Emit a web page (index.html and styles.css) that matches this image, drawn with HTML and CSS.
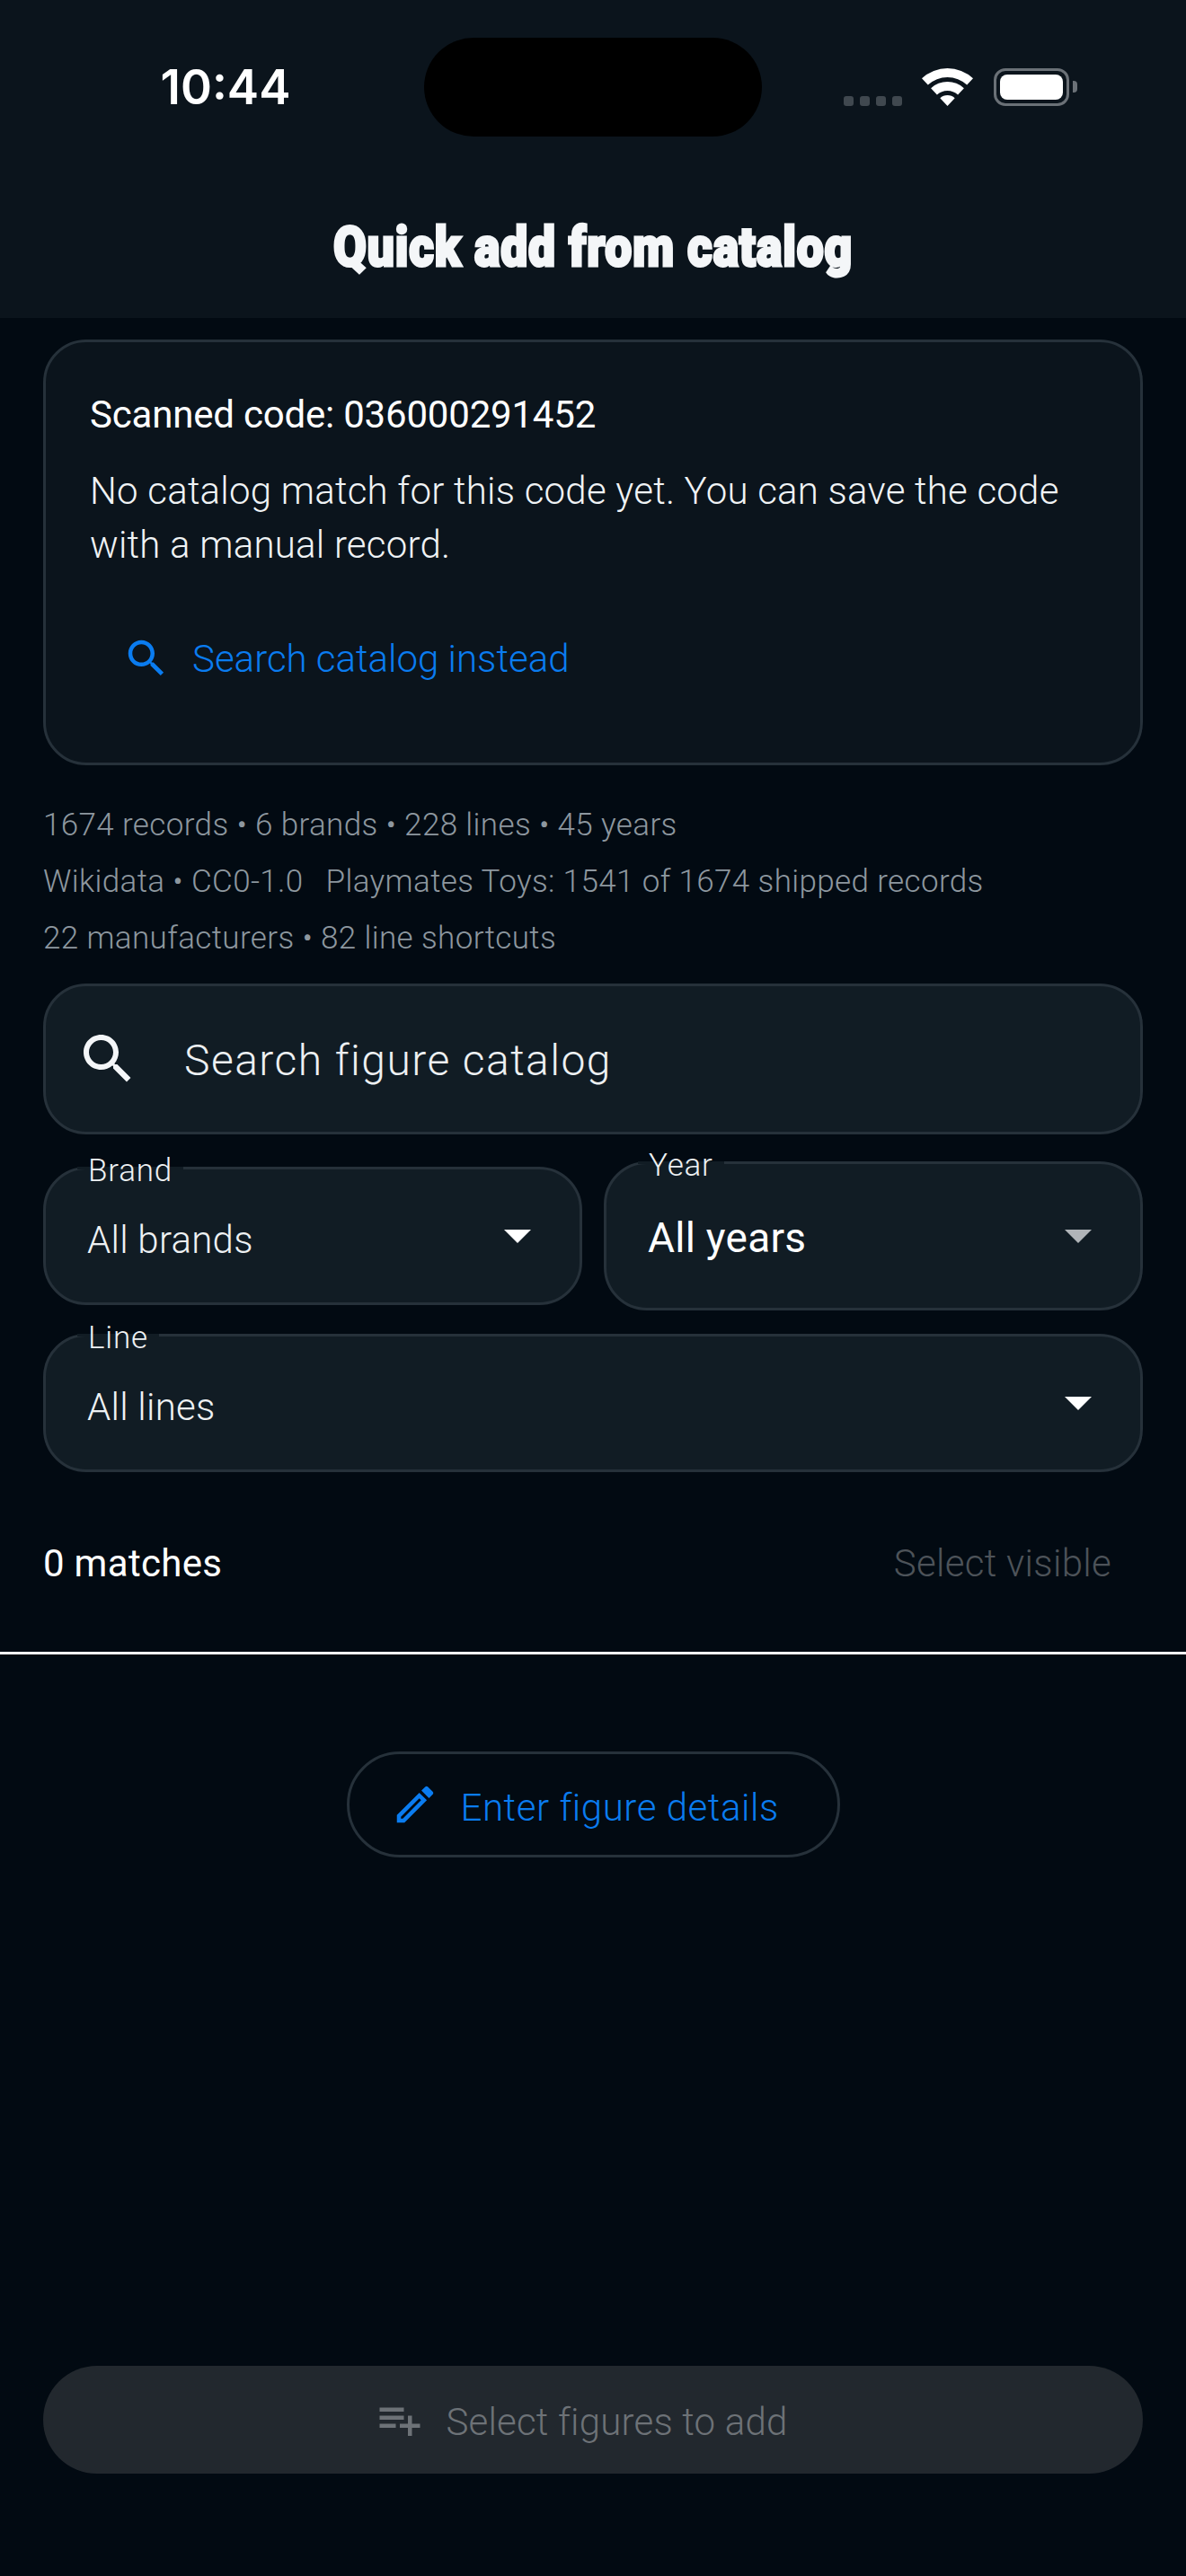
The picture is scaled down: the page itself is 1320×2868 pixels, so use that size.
FILE: index.html
```html
<!DOCTYPE html>
<html lang="en">
<head>
<meta charset="utf-8">
<title>Quick add from catalog</title>
<link rel="stylesheet" href="styles.css">
</head>
<body>
<header class="appbar">
  <div class="status">
    <div class="status-left"><span class="time">10:44</span></div>
    <div class="island"></div>
    <div class="status-right">
      <div class="dots"><i></i><i></i><i></i><i></i></div>
      <svg class="wifi" viewBox="0 0 57 42"><path d="M0 11.2A42 42 0 0 1 57 11.2L50.2 18.5A32 32 0 0 0 6.8 18.5Z"/><path d="M10.1 22.2A27 27 0 0 1 46.9 22.2L40.1 29.5A17 17 0 0 0 16.9 29.5Z"/><path d="M20.3 33.2A12 12 0 0 1 36.7 33.2L28.5 42Z"/></svg>
      <div class="battery"><div class="battery-fill"></div></div>
      <div class="battery-nub"></div>
    </div>
  </div>
  <h1 class="title"><span>Quick add from catalog</span></h1>
</header>
<main class="main">
  <section class="card">
    <p class="code">Scanned code: 036000291452</p>
    <p class="body-text">No catalog match for this code yet. You can save the code with a manual record.</p>
    <div class="link">
      <svg class="icon-54 blue" viewBox="0 0 24 24"><path d="M15.5 14h-.79l-.28-.27C15.41 12.59 16 11.11 16 9.5 16 5.91 13.09 3 9.5 3S3 5.91 3 9.5 5.91 16 9.5 16c1.61 0 3.09-.59 4.23-1.57l.27.28v.79l5 4.99L20.49 19l-4.99-5zm-6 0C7.01 14 5 11.99 5 9.5S7.01 5 9.5 5 14 7.01 14 9.5 11.99 14 9.5 14z"/></svg>
      <span>Search catalog instead</span>
    </div>
  </section>
  <div class="stats">
    <p>1674 records • 6 brands • 228 lines • 45 years</p>
    <p>Wikidata • CC0-1.0 <span class="stat-gap">Playmates Toys: 1541 of 1674 shipped records</span></p>
    <p>22 manufacturers • 82 line shortcuts</p>
  </div>
  <div class="search">
    <svg class="icon-72" viewBox="0 0 24 24"><path d="M15.5 14h-.79l-.28-.27C15.41 12.59 16 11.11 16 9.5 16 5.91 13.09 3 9.5 3S3 5.91 3 9.5 5.91 16 9.5 16c1.61 0 3.09-.59 4.23-1.57l.27.28v.79l5 4.99L20.49 19l-4.99-5zm-6 0C7.01 14 5 11.99 5 9.5S7.01 5 9.5 5 14 7.01 14 9.5 11.99 14 9.5 14z"/></svg>
    <span>Search figure catalog</span>
  </div>
  <div class="filters">
    <div class="select">
      <span class="select-label">Brand</span>
      <span class="select-value">All brands</span>
      <svg class="arrow" viewBox="0 0 30 15"><path d="M0 0H30L15 15Z"/></svg>
    </div>
    <div class="select select-active">
      <span class="select-label">Year</span>
      <span class="select-value">All years</span>
      <svg class="arrow arrow-dim" viewBox="0 0 30 15"><path d="M0 0H30L15 15Z"/></svg>
    </div>
  </div>
  <div class="select select-line">
    <span class="select-label">Line</span>
    <span class="select-value">All lines</span>
    <svg class="arrow" viewBox="0 0 30 15"><path d="M0 0H30L15 15Z"/></svg>
  </div>
  <div class="results">
    <span class="count">0 matches</span>
    <span class="select-visible">Select visible</span>
  </div>
</main>
<div class="divider"></div>
<div class="details-wrap">
  <div class="details">
    <svg class="icon-54 blue" viewBox="0 0 24 24"><path d="M14.06 9.02l.92.92L5.92 19H5v-.92l9.06-9.06M17.66 3c-.25 0-.51.1-.7.29l-1.83 1.83 3.75 3.75 1.83-1.83c.39-.39.39-1.02 0-1.41l-2.34-2.34c-.2-.2-.45-.29-.71-.29zm-3.6 3.19L3 17.25V21h3.75L17.81 9.94l-3.75-3.75z"/></svg>
    <span>Enter figure details</span>
  </div>
</div>
<footer class="footer">
  <div class="add">
    <svg class="icon-54 grey" viewBox="0 0 24 24"><path d="M14 10H2v2h12v-2zm0-4H2v2h12V6zm4 8v-4h-2v4h-4v2h4v4h2v-4h4v-2h-4zM2 16h8v-2H2v2z"/></svg>
    <span>Select figures to add</span>
  </div>
</footer>
</body>
</html>
```
FILE: styles.css
```css
* { box-sizing: border-box; }
html, body { margin: 0; padding: 0; }
body {
  width: 1320px;
  height: 2868px;
  background: #020a12;
  color: #f4f6f8;
  font-family: Roboto, "Liberation Sans", sans-serif;
  font-size: 42px;
  font-weight: 300;
  display: flex;
  flex-direction: column;
  overflow: hidden;
}
p { margin: 0; }
.appbar { height: 354px; background: #0b141c; flex: none; }
.status { height: 196px; padding-top: 42px; display: flex; align-items: flex-start; }
.status-left { width: 472px; height: 110px; padding-left: 30px; display: flex; align-items: center; justify-content: center; }
.time { font-family: Inter, sans-serif; font-weight: 600; font-size: 53px; color: #fff; }
.island { width: 376px; height: 110px; border-radius: 55px; background: #000; }
.status-right { margin-left: 91px; height: 110px; display: flex; align-items: center; padding-bottom: 1px; }
.dots { display: flex; gap: 7px; align-self: center; margin-top: 31px; }
.dots i { display: block; width: 11px; height: 11px; border-radius: 3px; background: #40484f; }
.wifi { width: 57px; height: 42px; fill: #fff; margin-left: 22px; }
.battery { width: 84px; height: 42px; margin-left: 23px; padding: 4px; border: 3px solid #6b7177; border-radius: 13px; }
.battery-fill { width: 100%; height: 100%; background: #fff; border-radius: 8px; }
.battery-nub { width: 5px; height: 13px; margin-left: 4px; background: #6b7177; border-radius: 0 4px 4px 0; }
.title { margin: 0; height: 158px; padding-bottom: 2px; display: flex; align-items: center; justify-content: center; font-size: 62px; font-weight: 900; color: #f4f6f8; }
.title span { display: inline-block; white-space: nowrap; transform: scaleX(.86); -webkit-text-stroke: 3px #f4f6f8; letter-spacing: 1px; }
.main { padding: 24px 48px 0; flex: none; }
.card { height: 474px; background: #0b141c; border: 3px solid #26313a; border-radius: 48px; padding: 51px 49px 0; }
.code { font-weight: 400; line-height: 60px; letter-spacing: -.2px; color: #fff; }
.body-text { margin-top: 25px; line-height: 60px; letter-spacing: .22px; color: #f0f3f5; }
.link { margin-top: 24px; height: 144px; margin-left: 36px; display: flex; align-items: center; gap: 24px; color: #0a7cf0; letter-spacing: 0; }
.blue { fill: #0a7cf0; }
.grey { fill: #6d7277; }
.icon-54 { width: 54px; height: 54px; flex: none; }
.icon-72 { width: 72px; height: 72px; flex: none; fill: #f4f6f8; }
.stats { margin-top: 35px; font-size: 35px; line-height: 63px; color: #8d979f; letter-spacing: .37px; }
.stat-gap { margin-left: 16px; }
.search { margin-top: 19px; height: 168px; display: flex; align-items: center; gap: 49px; padding-left: 33px; background: #111c24; border: 3px solid #26313a; border-radius: 48px; font-size: 48px; letter-spacing: 1.45px; color: #edf0f2; }
.search span { padding-top: 2px; }
.filters { margin-top: 30px; display: grid; grid-template-columns: 1fr 1fr; gap: 24px; align-items: center; }
.select { position: relative; height: 154px; display: flex; align-items: center; justify-content: space-between; padding: 0 54px 0 46px; background: #111c24; border: 3px solid #26313a; border-radius: 48px; color: #eef1f3; }
.select-active { height: 166px; }
.select-active .select-value { font-weight: 400; font-size: 46px; color: #fff; padding-top: 4px; }
.select-line { margin-top: 26px; }
.select-label { position: absolute; z-index: 0; left: 35px; top: -16px; padding: 0 12px; height: 36px; line-height: 36px; font-size: 35px; letter-spacing: .8px; color: #eef1f3; }
.select-label::before { content: ""; position: absolute; z-index: -1; left: 0; right: 0; top: 13px; height: 3px; background: #111c24; }
.select-value { padding-top: 8px; letter-spacing: .25px; }
.arrow { width: 30px; height: 15px; fill: #fff; }
.arrow-dim { fill: #b0b4b8; }
.results { margin-top: 51px; height: 100px; display: flex; align-items: center; justify-content: space-between; padding: 0 35px 0 0; }
.count { font-weight: 400; color: #fff; letter-spacing: .3px; }
.select-visible { color: #4d5359; letter-spacing: .3px; }
.divider { margin-top: 49px; height: 3px; background: #fff; flex: none; }
.details-wrap { margin-top: 108px; display: flex; justify-content: center; flex: none; }
.details { width: 549px; height: 118px; display: flex; align-items: center; gap: 24px; padding-left: 46px; border: 3px solid #26313a; border-radius: 59px; color: #0a7cf0; letter-spacing: .55px; }
.details span { padding-top: 6px; }
.footer { margin-top: auto; padding: 0 48px 114px; flex: none; }
.add { height: 120px; padding-right: 25px; display: flex; align-items: center; justify-content: center; gap: 24px; background: #22282e; border-radius: 60px; color: #6d7277; letter-spacing: .2px; }
.add span { padding-top: 4px; }
```
